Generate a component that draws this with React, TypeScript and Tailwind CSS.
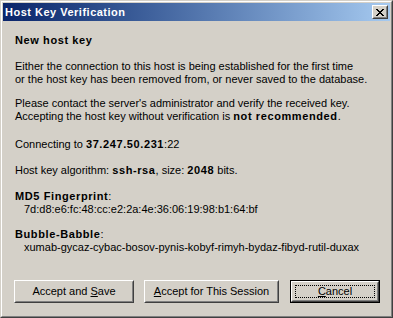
import React from 'react';

const font = { fontFamily: '"Liberation Sans", Arial, sans-serif' };

// classic raised 3D button
const Btn: React.FC<{ width: string; isDefault?: boolean; children: React.ReactNode }> = ({ width, isDefault, children }) => {
  if (isDefault) {
    return (
      <div className={`${width} h-[23px] border border-black`}>
        <div className="h-full border border-t-white border-l-white border-r-[#404040] border-b-[#404040]">
          <div className="h-full border border-t-[#d4d0c8] border-l-[#d4d0c8] border-r-[#808080] border-b-[#808080] p-[2px]">
            <div className="h-full border border-dotted border-black flex items-center justify-center text-[11px] text-black">
              {children}
            </div>
          </div>
        </div>
      </div>
    );
  }
  return (
    <div className={`${width} h-[23px] border border-t-white border-l-white border-r-[#404040] border-b-[#404040]`}>
      <div className="h-full border border-t-[#d4d0c8] border-l-[#d4d0c8] border-r-[#808080] border-b-[#808080] flex items-center justify-center text-[11px] text-black">
        {children}
      </div>
    </div>
  );
};

const B: React.FC<{ children: React.ReactNode }> = ({ children }) => (
  <b className="font-bold tracking-[0.6px]">{children}</b>
);

const App: React.FC = () => {
  return (
    <div style={font} className="w-[393px] h-[318px] bg-[#d4d0c8] border border-t-[#d4d0c8] border-l-[#d4d0c8] border-r-[#404040] border-b-[#404040]">
      <div className="h-full border border-t-white border-l-white border-r-[#808080] border-b-[#808080] p-px">
        {/* title bar */}
        <div className="h-[18px] flex items-center justify-between bg-gradient-to-r from-[#0a246a] to-[#a6caf0] pl-[2px] pr-[2px]">
          <span className="text-[11px] font-bold tracking-[0.5px] text-white leading-[18px]">Host Key Verification</span>
          <div className="w-[16px] h-[14px] border border-t-white border-l-white border-r-[#404040] border-b-[#404040] bg-[#d4d0c8]">
            <div className="h-full border border-t-[#d4d0c8] border-l-[#d4d0c8] border-r-[#808080] border-b-[#808080] flex items-center justify-center">
              <svg width="8" height="7" viewBox="0 0 8 7" shapeRendering="crispEdges">
                <path d="M0 0h2v1h-2zM6 0h2v1h-2zM1 1h2v1h-2zM5 1h2v1h-2zM2 2h4v1h-4zM3 3h2v1h-2zM2 4h4v1h-4zM1 5h2v1h-2zM5 5h2v1h-2zM0 6h2v1h-2zM6 6h2v1h-2z" fill="black" />
              </svg>
            </div>
          </div>
        </div>

        {/* client area */}
        <div className="pl-[12px] pt-[13px] text-[11px] leading-[13px] text-black">
          <div><B>New host key</B></div>

          <div className="mt-[13px]">
            <div>Either the connection to this host is being established for the first time</div>
            <div>or the host key has been removed from, or never saved to the database.</div>
          </div>

          <div className="mt-[11px]">
            <div>Please contact the server's administrator and verify the received key.</div>
            <div>Accepting the host key without verification is <B>not recommended</B>.</div>
          </div>

          <div className="mt-[15px]">
            Connecting to <B>37.247.50.231</B>:22
          </div>

          <div className="mt-[13px]">
            Host key algorithm: <B>ssh-rsa</B>, size: <B>2048</B> bits.
          </div>

          <div className="mt-[13px]">
            <div><B>MD5 Fingerprint</B>:</div>
            <div className="pl-[9px]">7d:d8:e6:fc:48:cc:e2:2a:4e:36:06:19:98:b1:64:bf</div>
          </div>

          <div className="mt-[12px]">
            <div><B>Bubble-Babble</B>:</div>
            <div className="pl-[9px]">xumab-gycaz-cybac-bosov-pynis-kobyf-rimyh-bydaz-fibyd-rutil-duxax</div>
          </div>
        </div>

        {/* buttons */}
        <div className="flex pl-[11px] mt-[26px]">
          <Btn width="w-[120px]">
            <span>Accept and <span className="underline">S</span>ave</span>
          </Btn>
          <div className="w-[10px]" />
          <Btn width="w-[135px]">
            <span><span className="underline">A</span>ccept for This Session</span>
          </Btn>
          <div className="w-[11px]" />
          <Btn width="w-[90px]" isDefault>
            <span><span className="underline">C</span>ancel</span>
          </Btn>
        </div>
      </div>
    </div>
  );
};

export default App;
